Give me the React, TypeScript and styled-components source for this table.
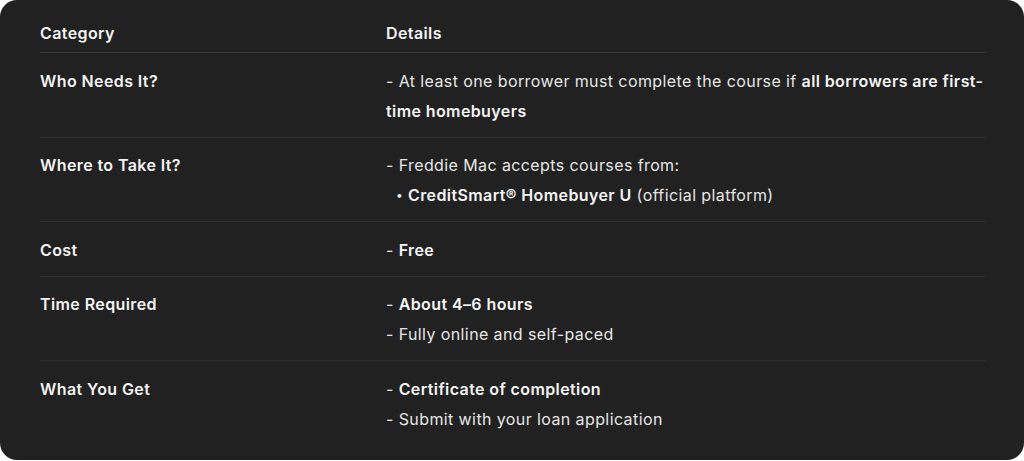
import type { ReactNode } from "react";
import styled, { createGlobalStyle } from "styled-components";

const GlobalStyle = createGlobalStyle`
    html, body {
        margin: 0;
        padding: 0;
        background: #ffffff;
    }
    body {
        font-family: Inter, "Noto Sans", "Liberation Sans", sans-serif;
        -webkit-font-smoothing: antialiased;
    }
`;

const Panel = styled.div`
    box-sizing: border-box;
    height: 460px;
    background: #212121;
    border-radius: 17px;
    padding: 18px 38px 0 40px;
    color: #ececec;
    font-size: 16px;
    line-height: 30px;
    letter-spacing: 0.4px;
`;

const Table = styled.table`
    width: 100%;
    border-collapse: collapse;
    table-layout: fixed;
`;

const HeadCell = styled.th`
    text-align: left;
    font-weight: 600;
    padding: 0 0 4px 0;
    border-bottom: 1px solid #3a3a3a;
    color: #f3f3f3;

    &:first-child {
        width: 346px;
    }
`;

const BodyRow = styled.tr`
    border-bottom: 1px solid #2d2d2d;

    &:last-child {
        border-bottom: none;
    }
`;

const CategoryCell = styled.td`
    vertical-align: top;
    padding: 12.5px 0 11px;
    font-weight: 600;
    color: #f3f3f3;
`;

const DetailsCell = styled.td`
    vertical-align: top;
    padding: 12.5px 0 11px;
    color: #e6e6e6;

    strong {
        font-weight: 600;
        color: #f5f5f5;
    }
`;

const Line = styled.div`
    margin: 0;
`;

const Bullets = styled.ul`
    margin: 0;
    padding: 0 0 0 10px;
    list-style: none;
    line-height: 30px;

    li {
        position: relative;
        padding-left: 12px;
    }

    li::before {
        content: "•";
        position: absolute;
        left: 0;
        top: 0;
        font-size: 12px;
        line-height: 30px;
    }
`;

type Row = {
    category: string;
    details: ReactNode;
};

const rows: Row[] = [
    {
        category: "Who Needs It?",
        details: (
            <Line>
                - At least one borrower must complete the course if{" "}
                <strong>all borrowers are first-time homebuyers</strong>
            </Line>
        ),
    },
    {
        category: "Where to Take It?",
        details: (
            <>
                <Line>- Freddie Mac accepts courses from:</Line>
                <Bullets>
                    <li>
                        <strong>CreditSmart® Homebuyer U</strong> (official platform)
                    </li>
                </Bullets>
            </>
        ),
    },
    {
        category: "Cost",
        details: (
            <Line>
                - <strong>Free</strong>
            </Line>
        ),
    },
    {
        category: "Time Required",
        details: (
            <>
                <Line>
                    - <strong>About 4–6 hours</strong>
                </Line>
                <Line>- Fully online and self-paced</Line>
            </>
        ),
    },
    {
        category: "What You Get",
        details: (
            <>
                <Line>
                    - <strong>Certificate of completion</strong>
                </Line>
                <Line>- Submit with your loan application</Line>
            </>
        ),
    },
];

export default function App() {
    return (
        <>
            <GlobalStyle />
            <Panel>
                <Table>
                    <thead>
                        <tr>
                            <HeadCell>Category</HeadCell>
                            <HeadCell>Details</HeadCell>
                        </tr>
                    </thead>
                    <tbody>
                        {rows.map((row) => (
                            <BodyRow key={row.category}>
                                <CategoryCell>{row.category}</CategoryCell>
                                <DetailsCell>{row.details}</DetailsCell>
                            </BodyRow>
                        ))}
                    </tbody>
                </Table>
            </Panel>
        </>
    );
}
